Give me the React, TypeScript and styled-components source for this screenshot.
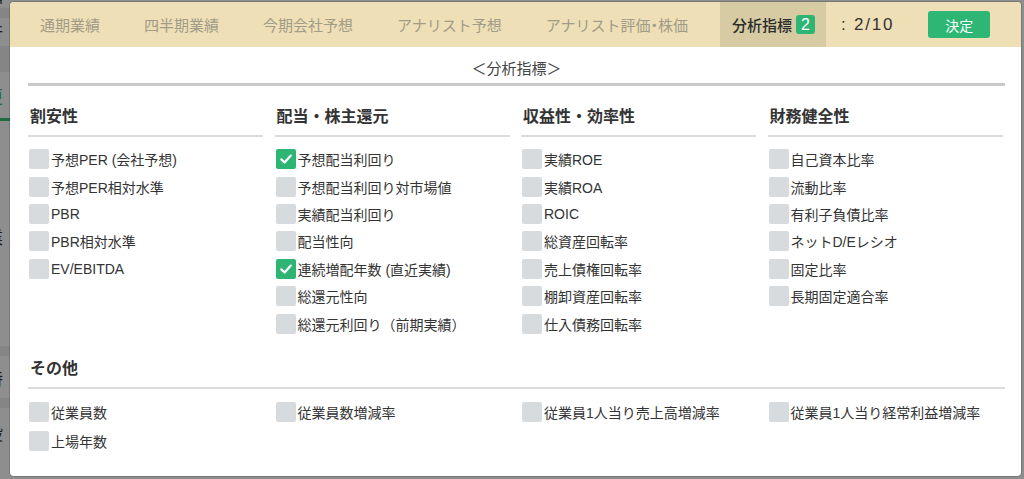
import React from 'react';
import styled, { createGlobalStyle } from 'styled-components';

const GlobalStyle = createGlobalStyle`
    html, body {
        margin: 0;
        padding: 0;
        width: 1024px;
        height: 479px;
        overflow: hidden;
        background: #8d8d8d;
        font-family: 'Liberation Sans', 'Noto Sans CJK JP', sans-serif;
    }
`;

const Screen = styled.div`
    position: relative;
    width: 1024px;
    height: 479px;
    overflow: hidden;
    background: #8e8e8e;
`;

// the dimmed page behind the dialog, only its left edge is visible
const Backdrop = styled.div`
    display: flex;
    flex-direction: column;
    width: 40px;
    height: 100%;
    margin-left: -14px;
`;

const BackRow = styled.div<{ $h: number; $band?: boolean }>`
    height: ${(p) => p.$h}px;
    display: flex;
    align-items: center;
    background: ${(p) => (p.$band ? '#858585' : 'transparent')};
    font-family: 'Noto Sans CJK JP', sans-serif;
    font-size: 17px;
    color: #1e1e1e;
`;

const BackGreen = styled.span`
    color: #1f6b3f;
`;

const BackLine = styled.div`
    height: 3px;
    width: 100%;
    background: #1f6b3f;
`;

const Modal = styled.div`
    position: absolute;
    left: 10px;
    top: 2px;
    width: 1011px;
    height: 474px;
    background: #fff;
    border-radius: 4px;
    overflow: hidden;
    box-shadow: 0 0 0 1px rgba(0, 0, 0, 0.15);
    display: flex;
    flex-direction: column;
`;

const Header = styled.div`
    height: 45px;
    flex: none;
    background: #eedfb6;
    display: flex;
    align-items: stretch;
    padding-left: 18px;
`;

const TabList = styled.div`
    display: flex;
    align-items: stretch;
    gap: 21px;
`;

const Tab = styled.div<{ $active?: boolean }>`
    display: flex;
    align-items: center;
    padding: 0 11px 0 12px;
    background: ${(p) => (p.$active ? '#d7cba4' : 'transparent')};
    color: ${(p) => (p.$active ? '#2b2b2b' : '#a19c88')};
    font-family: 'Noto Sans CJK JP', sans-serif;
    font-size: 15px;
    font-weight: ${(p) => (p.$active ? 500 : 400)};
    white-space: nowrap;
`;

// the middle dot is set proportional (narrow) in the original font
const NarrowDot = styled.span`
    font-feature-settings: 'palt';
`;

const Badge = styled.span`
    margin-left: 4px;
    width: 19px;
    height: 19px;
    border-radius: 3px;
    background: #2fb573;
    color: #fff;
    font-family: 'Liberation Sans', sans-serif;
    font-size: 16px;
    display: flex;
    align-items: center;
    justify-content: center;
`;

const Counter = styled.div`
    display: flex;
    align-items: center;
    color: #333;
    font-family: 'Liberation Sans', sans-serif;
    font-size: 17px;
    letter-spacing: 1.8px;
    white-space: nowrap;
    margin-left: 15px;
`;

const Submit = styled.button`
    align-self: center;
    margin-left: 34px;
    width: 62px;
    height: 27px;
    border: none;
    border-radius: 3px;
    background: #2db674;
    color: #fff;
    font-family: 'Noto Sans CJK JP', sans-serif;
    font-size: 14px;
    padding: 0;
`;

const Body = styled.div`
    padding: 0 16px 0 18px;
    display: flex;
    flex-direction: column;
`;

const Title = styled.div`
    margin-top: 13px;
    text-align: center;
    font-family: 'Noto Sans CJK JP', sans-serif;
    font-size: 15px;
    line-height: 16px;
    color: #444;
`;

const ThickRule = styled.div`
    height: 3px;
    margin-top: 7px;
    background: #c9c9c9;
`;

const Grid = styled.div`
    display: grid;
    grid-template-columns: repeat(4, 235px);
    column-gap: 11.5px;
    margin-top: 15px;
`;

const Section = styled.div``;

const Heading = styled.div`
    height: 36px;
    box-sizing: border-box;
    display: flex;
    align-items: flex-end;
    padding: 0 0 10px 2px;
    border-bottom: 2px solid #dcdcdc;
    font-family: 'Noto Sans CJK JP', sans-serif;
    font-size: 16px;
    line-height: 20px;
    font-weight: 700;
    color: #333;
`;

const ItemList = styled.div<{ $pad?: number }>`
    display: flex;
    flex-direction: column;
    padding-top: ${(p) => p.$pad ?? 8.5}px;
`;

const Item = styled.label<{ $h?: number }>`
    display: flex;
    align-items: center;
    height: ${(p) => p.$h ?? 27.4}px;
    gap: 2px;
    padding-left: 1px;
    font-family: 'Liberation Sans', 'Noto Sans CJK JP', sans-serif;
    font-size: 14px;
    color: #333;
    white-space: nowrap;
`;

const Box = styled.span<{ $on?: boolean }>`
    width: 20px;
    height: 20px;
    flex: none;
    border-radius: 2px;
    background: ${(p) => (p.$on ? '#2fb573' : '#d7dbde')};
    display: flex;
    align-items: center;
    justify-content: center;
`;

const OtherBlock = styled.div`
    margin-top: 16px;
`;

const OtherGrid = styled.div`
    display: grid;
    grid-template-columns: repeat(4, 235px);
    column-gap: 11.5px;
`;

const Check = () => (
    <svg width="14" height="14" viewBox="0 0 14 14">
        <path
            d="M2.3 7.4 L5.6 10.4 L11.8 3.6"
            fill="none"
            stroke="#fff"
            strokeWidth="2.2"
            strokeLinecap="round"
            strokeLinejoin="round"
        />
    </svg>
);

type Metric = { label: string; on?: boolean };

const sections: { title: string; items: Metric[] }[] = [
    {
        title: '割安性',
        items: [
            { label: '予想PER (会社予想)' },
            { label: '予想PER相対水準' },
            { label: 'PBR' },
            { label: 'PBR相対水準' },
            { label: 'EV/EBITDA' },
        ],
    },
    {
        title: '配当・株主還元',
        items: [
            { label: '予想配当利回り', on: true },
            { label: '予想配当利回り対市場値' },
            { label: '実績配当利回り' },
            { label: '配当性向' },
            { label: '連続増配年数 (直近実績)', on: true },
            { label: '総還元性向' },
            { label: '総還元利回り（前期実績）' },
        ],
    },
    {
        title: '収益性・効率性',
        items: [
            { label: '実績ROE' },
            { label: '実績ROA' },
            { label: 'ROIC' },
            { label: '総資産回転率' },
            { label: '売上債権回転率' },
            { label: '棚卸資産回転率' },
            { label: '仕入債務回転率' },
        ],
    },
    {
        title: '財務健全性',
        items: [
            { label: '自己資本比率' },
            { label: '流動比率' },
            { label: '有利子負債比率' },
            { label: 'ネットD/Eレシオ' },
            { label: '固定比率' },
            { label: '長期固定適合率' },
        ],
    },
];

// その他 columns
const others: Metric[][] = [
    [{ label: '従業員数' }, { label: '上場年数' }],
    [{ label: '従業員数増減率' }],
    [{ label: '従業員1人当り売上高増減率' }],
    [{ label: '従業員1人当り経常利益増減率' }],
];

const tabs = ['通期業績', '四半期業績', '今期会社予想', 'アナリスト予想'];

const MetricItem = ({ m, h }: { m: Metric; h?: number }) => (
    <Item $h={h}>
        <Box $on={m.on}>{m.on && <Check />}</Box>
        {m.label}
    </Item>
);

const App = () => {
    return (
        <>
            <GlobalStyle />
            <Screen>
                <Backdrop>
                    <BackRow $h={8}>営</BackRow>
                    <BackRow $h={10} $band />
                    <BackRow $h={28}>行</BackRow>
                    <BackRow $h={26} $band />
                    <BackRow $h={46}>
                        <BackGreen>更</BackGreen>
                    </BackRow>
                    <BackLine />
                    <BackRow $h={100} />
                    <BackRow $h={30}>業</BackRow>
                    <BackRow $h={95} />
                    <BackRow $h={10} $band />
                    <BackRow $h={42}>特</BackRow>
                    <BackRow $h={10} $band />
                    <BackRow $h={48}>設</BackRow>
                </Backdrop>
                <Modal>
                    <Header>
                        <TabList>
                            {tabs.map((t) => (
                                <Tab key={t}>{t}</Tab>
                            ))}
                            <Tab>
                                アナリスト評価<NarrowDot>・</NarrowDot>株価
                            </Tab>
                            <Tab $active>
                                分析指標<Badge>2</Badge>
                            </Tab>
                        </TabList>
                        <Counter>: 2/10</Counter>
                        <Submit>決定</Submit>
                    </Header>
                    <Body>
                        <Title>＜分析指標＞</Title>
                        <ThickRule />
                        <Grid>
                            {sections.map((s) => (
                                <Section key={s.title}>
                                    <Heading>{s.title}</Heading>
                                    <ItemList>
                                        {s.items.map((m) => (
                                            <MetricItem key={m.label} m={m} />
                                        ))}
                                    </ItemList>
                                </Section>
                            ))}
                        </Grid>
                        <OtherBlock>
                            <Heading>その他</Heading>
                            <OtherGrid>
                                {others.map((col, i) => (
                                    <ItemList key={i} $pad={8}>
                                        {col.map((m) => (
                                            <MetricItem key={m.label} m={m} h={29} />
                                        ))}
                                    </ItemList>
                                ))}
                            </OtherGrid>
                        </OtherBlock>
                    </Body>
                </Modal>
            </Screen>
        </>
    );
};

export default App;
